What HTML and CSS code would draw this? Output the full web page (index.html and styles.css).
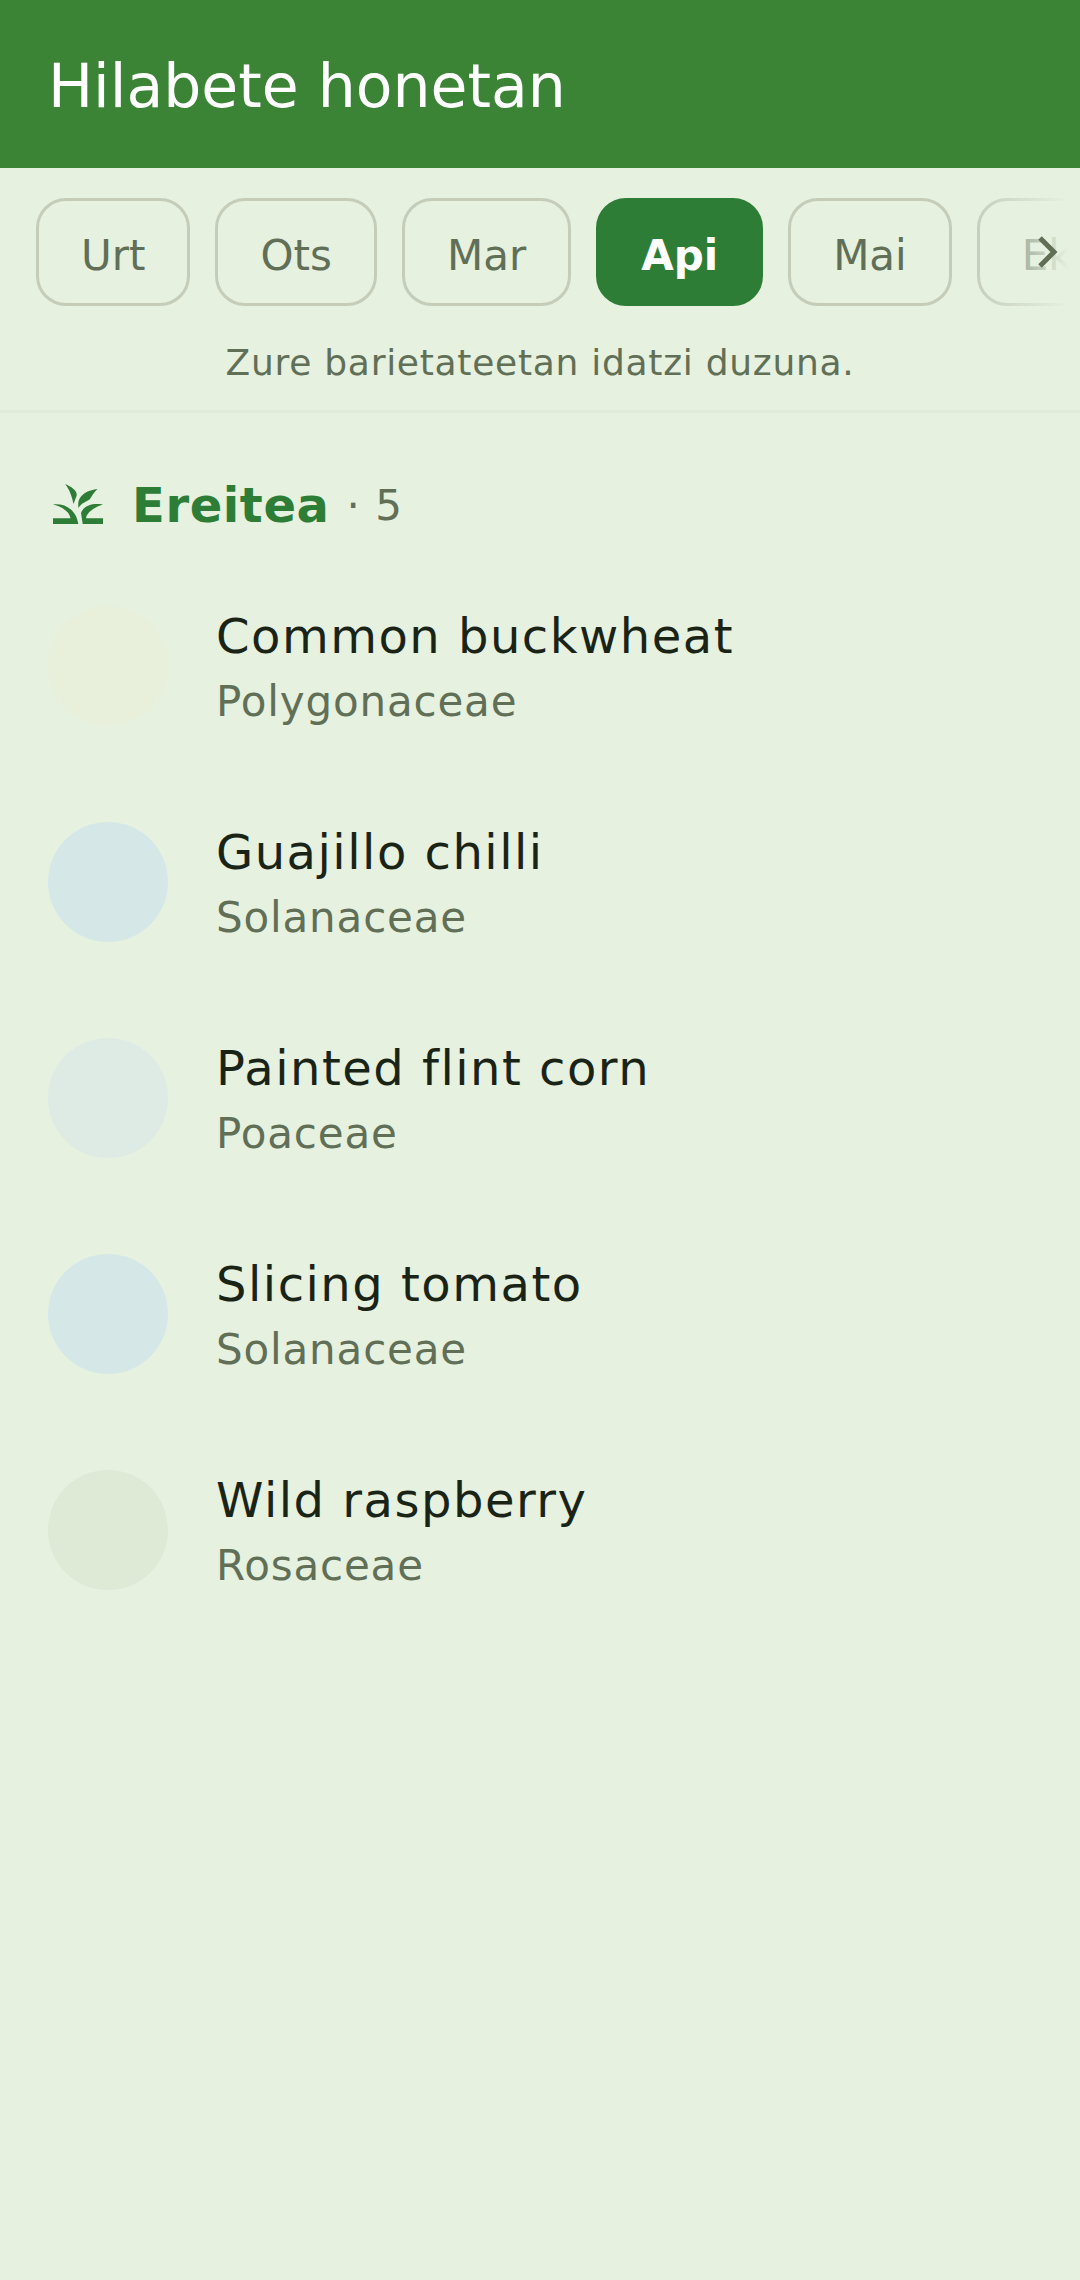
FILE: index.html
```html
<!DOCTYPE html>
<html lang="eu">
<head>
<meta charset="utf-8">
<title>Hilabete honetan</title>
<link rel="stylesheet" href="styles.css">
</head>
<body>
<header class="appbar"><h1 class="appbar-title">Hilabete honetan</h1></header>
<section class="months">
  <div class="chip-strip">
    <div class="chip-row">
      <div class="chip">Urt</div>
      <div class="chip">Ots</div>
      <div class="chip">Mar</div>
      <div class="chip chip-active">Api</div>
      <div class="chip">Mai</div>
      <div class="chip">Eka</div>
    </div>
    <div class="fade"></div>
    <svg class="chevron" viewBox="0 0 20 32" width="20" height="32"><path d="M2 2 L16 16 L2 30" fill="none" stroke="#616f57" stroke-width="5"/></svg>
  </div>
  <p class="hint">Zure barietateetan idatzi duzuna.</p>
</section>
<main class="content">
  <div class="section-head">
    <svg class="sprout" viewBox="0 0 50 40" width="50" height="40">
      <path fill="#2e7d36" d="M12 0 C19 3 25 7 23.500 12 L20.500 20 C19 13 17 6 12 0Z M44.500 5 C36 6 30 9 27 14 C25 17 25 21 25.500 24 C29 18 34 18 37 15 C39 12 41 8 44.500 5Z M0 20.500 C10 19 23 24 25.300 40 H0 V34.300 H17.500 C16.500 28 10 23 0 20.500Z M50 20.500 C40 19 31 21 28 29 L29.700 40 H50 V34.300 H33 C34 28 42 23 50 20.500Z"/>
    </svg>
    <span class="section-name">Ereitea</span>
    <span class="section-count">· 5</span>
  </div>
  <ul class="plants">
    <li class="plant"><span class="dot dot-cream"></span><div class="plant-text"><div class="plant-name">Common buckwheat</div><div class="plant-family">Polygonaceae</div></div></li>
    <li class="plant"><span class="dot dot-blue"></span><div class="plant-text"><div class="plant-name">Guajillo chilli</div><div class="plant-family">Solanaceae</div></div></li>
    <li class="plant"><span class="dot dot-grey"></span><div class="plant-text"><div class="plant-name">Painted flint corn</div><div class="plant-family">Poaceae</div></div></li>
    <li class="plant"><span class="dot dot-blue"></span><div class="plant-text"><div class="plant-name">Slicing tomato</div><div class="plant-family">Solanaceae</div></div></li>
    <li class="plant"><span class="dot dot-green"></span><div class="plant-text"><div class="plant-name">Wild raspberry</div><div class="plant-family">Rosaceae</div></div></li>
  </ul>
</main>
</body>
</html>
```

FILE: styles.css
```css
* { box-sizing: border-box; }
html, body { margin: 0; padding: 0; }
body {
  width: 1080px;
  height: 2280px;
  overflow: hidden;
  background: #e6f1e0;
  font-family: "DejaVu Sans", sans-serif;
  color: #1a2416;
}
.appbar {
  height: 168px;
  background: #3b8335;
  display: flex;
  align-items: center;
  padding: 3px 0 0 48px;
}
.appbar-title { margin: 0; font-size: 60px; font-weight: 400; color: #fff; }
.months { border-bottom: 3px solid #e1ebda; height: 245px; }
.chip-strip { position: relative; overflow: hidden; padding-top: 30px; }
.chip-row { display: flex; gap: 25px; padding-left: 36px; width: max-content; }
.chip {
  height: 108px;
  padding: 7px 42px 0;
  border: 3px solid #c5cdb9;
  border-radius: 30px;
  display: flex;
  align-items: center;
  font-size: 42px;
  color: #616f57;
}
.chip-active { background: #2e7d36; border-color: #2e7d36; color: #fff; font-weight: 700; }
.fade {
  position: absolute; top: 0; right: 0; bottom: 0; width: 110px;
  background: linear-gradient(to right, rgba(230,241,224,0), #e6f1e0 90%);
}
.chevron { position: absolute; right: 22px; top: 68px; }
.hint { margin: 36px 0 0; text-align: center; font-size: 36px; color: #616f57; letter-spacing: 0.72px; }
.content { padding: 0 48px; }
.section-head { display: flex; align-items: center; height: 90px; margin-top: 47px; }
.sprout { flex: none; margin: -2px 29px 0 5px; }
.section-name { font-size: 48px; font-weight: 700; color: #2e7d36; letter-spacing: 0.6px; }
.section-count { font-size: 42px; color: #616f57; margin-left: 17px; letter-spacing: 1px; }
.plants { list-style: none; margin: 8px 0 0; padding: 0; }
.plant { display: flex; align-items: center; height: 216px; gap: 48px; }
.plant-text { padding-top: 3px; }
.dot { width: 120px; height: 120px; border-radius: 50%; flex: none; }
.dot-cream { background: #e8efdb; }
.dot-blue { background: #d6e7e8; }
.dot-grey { background: #deeae4; }
.dot-green { background: #dee9d6; }
.plant-name { font-size: 48px; letter-spacing: 1.5px; color: #1a2416; line-height: 66px; }
.plant-family { font-size: 42px; letter-spacing: 0.84px; color: #616f57; line-height: 60px; margin-top: 3px; }
```
